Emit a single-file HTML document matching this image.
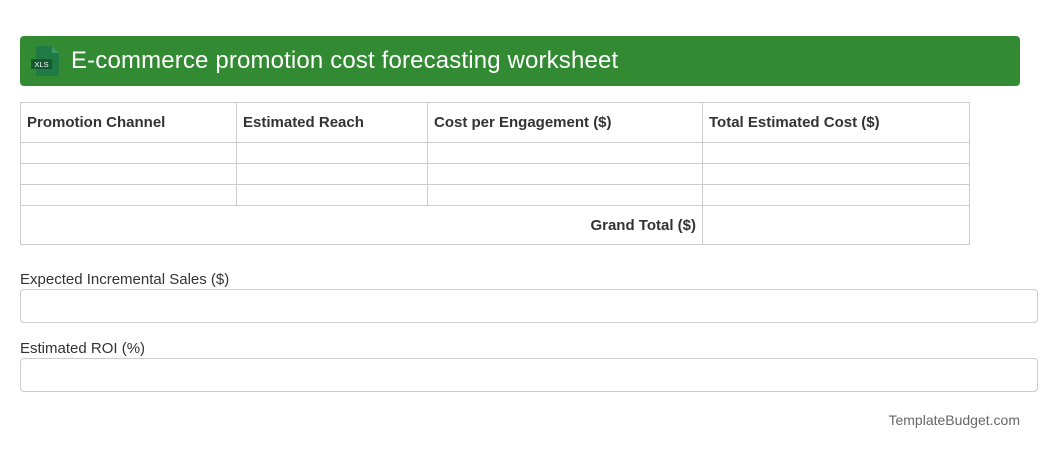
<!DOCTYPE html>
<html><head><meta charset="utf-8"><style>
body{margin:0;background:#fff;font-family:"Liberation Sans",Arial,sans-serif;width:1040px;height:449px;position:relative;overflow:hidden;color:#333}
.hdr{position:absolute;left:20px;top:36px;width:1000px;height:50px;background:#328a33;border-radius:4px}
.hdr .t{position:absolute;left:51px;top:11px;color:#fff;font-size:24px;line-height:28px;letter-spacing:0.15px}
.icon{position:absolute;left:11px;top:10px}
table{position:absolute;left:20px;top:102px;border-collapse:collapse;width:950px}
td{border:1px solid #ccc;font-size:15px;padding:0 6px;height:20px}
tr.h td{height:39px;font-weight:bold;color:#333}
tr.g td{height:38px}
.lbl{position:absolute;left:20px;font-size:15px;color:#333}
.box{position:absolute;left:20px;width:1016px;height:32px;border:1px solid #ccc;border-radius:4px}
.foot{position:absolute;right:20px;top:412px;font-size:14px;color:#666}
</style></head><body>
<div class="hdr">
<svg class="icon" width="30" height="32" viewBox="0 0 30 32">
<path d="M7 0h14l7 7v21a2 2 0 0 1-2 2H7a2 2 0 0 1-2-2V2a2 2 0 0 1 2-2z" fill="#1f7a45"/>
<path d="M21 0v7h7z" fill="#3c9a60"/>
<rect x="0" y="13" width="21" height="10" fill="#145a30"/>
<text x="10.5" y="21" font-size="7.5" fill="#fff" text-anchor="middle" font-family="Liberation Sans">XLS</text>
</svg>
<div class="t">E-commerce promotion cost forecasting worksheet</div>
</div>
<table>
<tr class="h"><td style="width:203px">Promotion Channel</td><td style="width:178px">Estimated Reach</td><td style="width:262px">Cost per Engagement ($)</td><td>Total Estimated Cost ($)</td></tr>
<tr><td></td><td></td><td></td><td></td></tr>
<tr><td></td><td></td><td></td><td></td></tr>
<tr><td></td><td></td><td></td><td></td></tr>
<tr class="g"><td colspan="3" style="text-align:right;font-weight:bold">Grand Total ($)</td><td></td></tr>
</table>
<div class="lbl" style="top:271px">Expected Incremental Sales ($)</div>
<div class="box" style="top:289px"></div>
<div class="lbl" style="top:340px">Estimated ROI (%)</div>
<div class="box" style="top:358px"></div>
<div class="foot">TemplateBudget.com</div>
</body></html>
